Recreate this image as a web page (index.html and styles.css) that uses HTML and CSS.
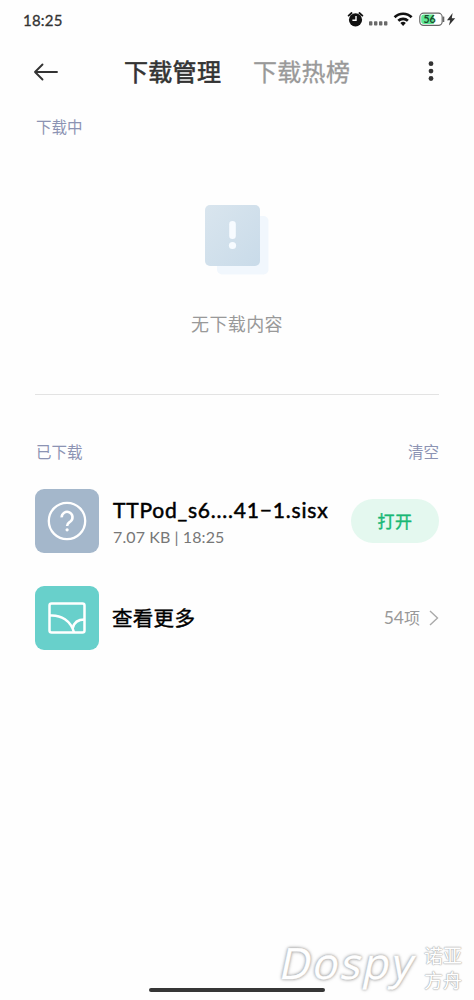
FILE: index.html
```html
<!DOCTYPE html>
<html lang="zh-CN">
<head>
<meta charset="utf-8">
<title>下载管理</title>
<link rel="stylesheet" href="styles.css">
</head>
<body>
<div class="screen">
  <div class="status">
    <span class="clock">18:25</span>
    <svg class="status-icons" width="110" height="18" viewBox="346 10 110 18">
      <circle cx="355.5" cy="19.8" r="6.6" fill="#111"/>
      <path d="M348.6 15.6l3-2.6M362.4 15.6l-3-2.6" stroke="#111" stroke-width="1.8" stroke-linecap="round"/>
      <path d="M356 16v4.3h-3.6" fill="none" stroke="#fff" stroke-width="1.4"/>
      <g fill="#6a6a6a"><rect x="369" y="21.2" width="3.4" height="4.4" rx=".8"/><rect x="374" y="21.2" width="3.4" height="4.4" rx=".8"/><rect x="379" y="21.2" width="3.4" height="4.4" rx=".8"/><rect x="384" y="21.2" width="3.4" height="4.4" rx=".8"/></g>
      <g fill="none" stroke="#111" stroke-width="2.7"><path d="M394.6 17.3a12 12 0 0 1 17 0"/><path d="M398.3 20.8a7 7 0 0 1 9.6 0"/></g>
      <path d="M400.4 22.9a4.2 4.2 0 0 1 5.4 0L403.1 26z" fill="#111"/>
      <rect x="419.8" y="13.2" width="22.4" height="12.2" rx="3.8" fill="#fff" stroke="#666" stroke-width="1.2"/>
      <path d="M424 14.6h9.8v9.4H424a2.8 2.8 0 0 1-2.8-2.8v-3.8a2.8 2.8 0 0 1 2.8-2.8z" fill="#5fe896"/>
      <path d="M443.6 16.6v5.4" stroke="#666" stroke-width="1.4"/>
      <text class="battery" x="429.6" y="22.9" text-anchor="middle">56</text>
      <path d="M452.6 13l-5.6 7.2h3.2l-1.3 5.3 6.3-7.3h-3.4z" fill="#333"/>
    </svg>
  </div>
  <div class="header">
    <svg class="back" width="26" height="20" viewBox="0 0 26 20"><path d="M24 10H2M9.5 2.5L2 10l7.5 7.5" fill="none" stroke="#333" stroke-width="1.9" stroke-linecap="round" stroke-linejoin="round"/></svg>
    <span class="tab active">下载管理</span>
    <span class="tab">下载热榜</span>
    <svg class="more" width="6" height="20" viewBox="0 0 6 20" fill="#333"><circle cx="3" cy="1.7" r="2.4"/><circle cx="3" cy="9.1" r="2.4"/><circle cx="3" cy="16.5" r="2.4"/></svg>
  </div>
  <div class="section-head"><span>下载中</span></div>
  <div class="empty">
    <svg width="66" height="72" viewBox="0 0 66 72">
      <defs><linearGradient id="card" x1="0" y1="0" x2="1" y2="1"><stop offset="0" stop-color="#d9e5ee"/><stop offset="1" stop-color="#c9dbe9"/></linearGradient></defs>
      <rect x="13" y="12" width="51.500" height="58.500" rx="5" fill="#f1f7fd"/>
      <rect x="1" y="1" width="55" height="61" rx="5" fill="url(#card)"/>
      <rect x="25.2" y="17" width="6.6" height="18" rx="3.3" fill="#f7fbff"/>
      <circle cx="28.5" cy="41.5" r="3.6" fill="#f7fbff"/>
    </svg>
    <span class="empty-text">无下载内容</span>
  </div>
  <div class="section-head done"><span>已下载</span><span>清空</span></div>
  <div class="row">
    <div class="tile file"><svg width="42" height="42" viewBox="0 0 42 42" fill="none" stroke="#fff"><circle cx="21" cy="21" r="18.2" stroke-width="2.3"/><path d="M15.7 17.4a5.4 5.4 0 1 1 8.7 4.1c-2 1.4-3.3 2-3.3 4.6" stroke-width="2.6"/><circle cx="21.1" cy="29.8" r="1.6" fill="#fff" stroke="none"/></svg></div>
    <div class="info"><span class="name">TTPod_s6....41−1.sisx</span><span class="meta">7.07 KB | 18:25</span></div>
    <span class="open">打开</span>
  </div>
  <div class="row">
    <div class="tile images"><svg width="38" height="32" viewBox="0 0 38 32" fill="none" stroke="#fff" stroke-width="2.5"><rect x="1.5" y="1.5" width="35" height="29" rx="2"/><path d="M1.5 13.500C13 12.500 23 19 26 30.500M24.800 26C26 20.500 30 17.500 36.500 17.500"/></svg></div>
    <span class="see-more">查看更多</span>
    <span class="count"><b>54</b>项</span>
    <svg width="10" height="18" viewBox="0 0 10 18"><path d="M1 2l7.5 7-7.5 7" fill="none" stroke="#aaa" stroke-width="1.4"/></svg>
  </div>
  <div class="home-bar"></div>
  <div class="watermark"><span class="brand">Dospy</span><span class="brand-cn">诺亚<br>方舟</span></div>
</div>
</body>
</html>
```
FILE: styles.css
```css
* { box-sizing: border-box; }
body { margin: 0; background: #fefefe; }
.screen {
  position: relative;
  display: flex;
  flex-direction: column;
  width: 474px;
  height: 1000px;
  overflow: hidden;
  background: #fefefe;
  font-family: Lato, "Noto Sans CJK SC", sans-serif;
  white-space: nowrap;
}
.status {
  display: flex;
  justify-content: space-between;
  align-items: center;
  height: 38px;
  padding: 0 18px 0 23px;
}
.clock { padding-top: 1px; font-size: 15px; line-height: 20px; letter-spacing: .2px; color: #333; -webkit-text-stroke: .3px #333; }
.battery { font: bold 10.5px Lato, sans-serif; fill: #174d2b; }
.header {
  display: flex;
  align-items: center;
  height: 66px;
  padding: 1px 40px 0 33px;
}
.back { margin-right: 65px; }
.tab { width: 129px; font-size: 24px; line-height: 34px; letter-spacing: .3px; color: #999; -webkit-text-stroke: .3px #999; }
.tab.active { color: #333; -webkit-text-stroke: .6px #333; }
.more { margin-left: auto; overflow: visible; }
.section-head {
  display: flex;
  justify-content: space-between;
  height: 46px;
  padding: 0 35px 0 36px;
  font-size: 15.5px;
  line-height: 46px;
  color: #8c93b3;
}
.empty {
  display: flex;
  flex-direction: column;
  align-items: center;
  height: 245px;
  margin: 0 35px;
  padding-top: 54px;
  border-bottom: 1px solid #e3e3e3;
}
.empty-text { margin-top: 35px; font-size: 18px; line-height: 26px; letter-spacing: .4px; color: #999; }
.section-head.done { height: 94px; line-height: 115px; }
.row { display: flex; align-items: center; height: 64px; margin: 0 35px 32.5px; }
.tile { display: flex; flex: none; align-items: center; justify-content: center; width: 64px; height: 64px; border-radius: 9px; }
.tile.file { background: #a4b7cb; }
.tile.images { background: #68d0cb; }
.info { display: flex; flex-direction: column; width: 240px; padding: 3px 0 0 14px; }
.name { font-size: 21px; line-height: 27px; letter-spacing: .8px; color: #000; -webkit-text-stroke: .5px #000; }
.meta { font-size: 16px; line-height: 27px; letter-spacing: .1px; color: #777; }
.open {
  width: 88px;
  height: 44px;
  margin-left: auto;
  border-radius: 22px;
  background: #e4f8ef;
  color: #18b875;
  font-size: 17px;
  line-height: 45px;
  letter-spacing: .5px;
  text-align: center;
  -webkit-text-stroke: .4px #18b875;
}
.see-more { margin: 0 auto 0 13px; font-size: 20.5px; line-height: 30px; letter-spacing: .3px; color: #000; -webkit-text-stroke: .4px #000; }
.count { margin-right: 9px; font-size: 16px; line-height: 24px; color: #999; }
.count b { font-size: 17.5px; font-weight: 400; }
.home-bar { width: 176px; height: 4px; margin: auto auto 8px 149px; border-radius: 2px; background: #363636; }
/* Brand mark floats over the bottom of the page */
.watermark {
  position: absolute;
  right: 12px;
  bottom: 4px;
  display: flex;
  align-items: center;
  color: #fff;
}
.brand {
  padding-bottom: 10px;
  font: 43px/46px "Open Sans", sans-serif;
  letter-spacing: 2px;
  transform: skewX(-12deg);
  -webkit-text-stroke: .4px #fff;
  text-shadow: 0 0 2px #aaa, 0 0 3px #aaa, 0 0 4px #bbb;
}
.brand-cn {
  margin-left: 9px;
  font-size: 19px;
  line-height: 25px;
  text-shadow: 0 0 1px #aaa, 0 0 1px #aaa, 0 0 2px #bbb;
}
```
